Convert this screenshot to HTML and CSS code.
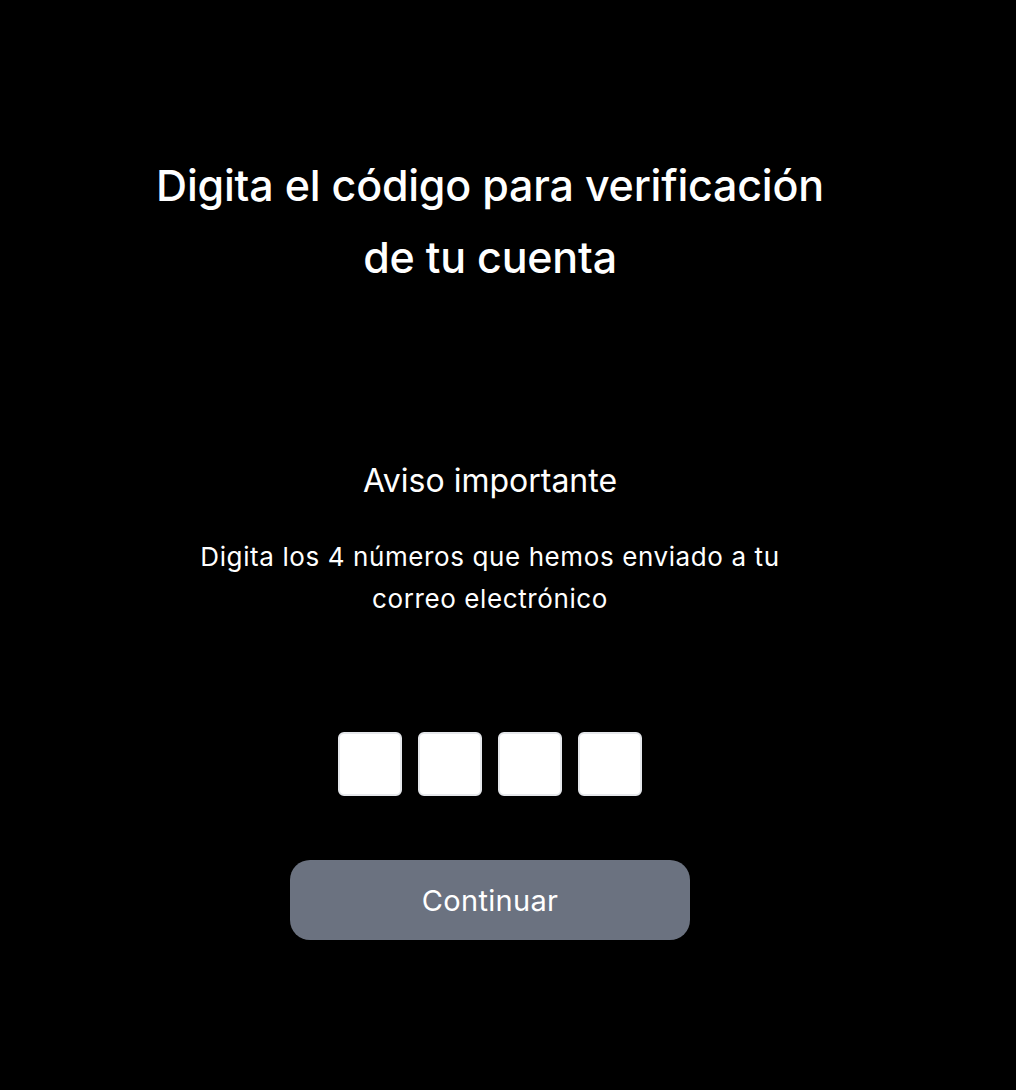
FILE: index.html
```html
<!DOCTYPE html>
<html lang="es">
<head>
<meta charset="utf-8">
<title>Verificación</title>
<link rel="stylesheet" href="styles.css">
</head>
<body>
<main class="page">
  <h1 class="title">Digita el código para verificación<br>de tu cuenta</h1>
  <h2 class="notice">Aviso importante</h2>
  <p class="desc">Digita los 4 números que hemos enviado a tu<br>correo electrónico</p>
  <div class="code">
    <input class="digit" type="text" maxlength="1">
    <input class="digit" type="text" maxlength="1">
    <input class="digit" type="text" maxlength="1">
    <input class="digit" type="text" maxlength="1">
  </div>
  <button class="continue" type="button">Continuar</button>
</main>
</body>
</html>
```
FILE: styles.css
```css
html, body {
  margin: 0;
  padding: 0;
  background: #000;
  height: 100%;
}
body {
  font-family: Inter, "Noto Sans", sans-serif;
  color: #fff;
}
.page {
  width: 980px;
  display: flex;
  flex-direction: column;
  align-items: center;
  text-align: center;
  padding-top: 149px;
}
.title {
  margin: 0;
  font-size: 43px;
  font-weight: 500;
  line-height: 72px;
  letter-spacing: -0.22px;
}
.notice {
  margin: 168px 0 0;
  font-size: 32px;
  font-weight: 400;
  line-height: 40px;
}
.desc {
  margin: 35px 0 0;
  font-size: 26px;
  line-height: 42px;
  letter-spacing: 0.6px;
}
.code {
  display: flex;
  gap: 16px;
  margin-top: 112px;
}
.digit {
  width: 64px;
  height: 64px;
  box-sizing: border-box;
  border: 2px solid #e5e7eb;
  border-radius: 6px;
  background: #fff;
  padding: 0;
  font-size: 28px;
  text-align: center;
}
.continue {
  margin-top: 64px;
  width: 400px;
  height: 80px;
  border: none;
  border-radius: 20px;
  background: #6b7280;
  color: #fff;
  font-family: inherit;
  font-size: 29px;
  font-weight: 400;
  letter-spacing: 0.3px;
}
```
